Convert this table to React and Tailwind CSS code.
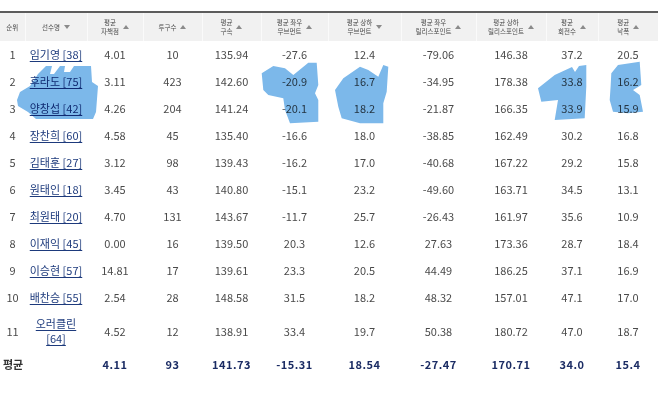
import React from "react";

const colW = ["w-[25px]","w-[62px]","w-[56px]","w-[59px]","w-[59px]","w-[67px]","w-[73px]","w-[75px]","w-[70px]","w-[52px]","w-[60px]"];

const headers = [
  { l: ["순위"] },
  { l: ["선수명"], a: "down" },
  { l: ["평균", "자책점"], a: "up" },
  { l: ["투구수"], a: "up" },
  { l: ["평균", "구속"], a: "up" },
  { l: ["평균 좌우", "무브먼트"], a: "up" },
  { l: ["평균 상하", "무브먼트"], a: "down" },
  { l: ["평균 좌우", "릴리스포인트"], a: "up" },
  { l: ["평균 상하", "릴리스포인트"], a: "up" },
  { l: ["평균", "회전수"], a: "up" },
  { l: ["평균", "낙폭"], a: "up" },
];

const rows = [
  ["1", "임기영 [38]", "4.01", "10", "135.94", "-27.6", "12.4", "-79.06", "146.38", "37.2", "20.5"],
  ["2", "후라도 [75]", "3.11", "423", "142.60", "-20.9", "16.7", "-34.95", "178.38", "33.8", "16.2"],
  ["3", "양창섭 [42]", "4.26", "204", "141.24", "-20.1", "18.2", "-21.87", "166.35", "33.9", "15.9"],
  ["4", "장찬희 [60]", "4.58", "45", "135.40", "-16.6", "18.0", "-38.85", "162.49", "30.2", "16.8"],
  ["5", "김태훈 [27]", "3.12", "98", "139.43", "-16.2", "17.0", "-40.68", "167.22", "29.2", "15.8"],
  ["6", "원태인 [18]", "3.45", "43", "140.80", "-15.1", "23.2", "-49.60", "163.71", "34.5", "13.1"],
  ["7", "최원태 [20]", "4.70", "131", "143.67", "-11.7", "25.7", "-26.43", "161.97", "35.6", "10.9"],
  ["8", "이재익 [45]", "0.00", "16", "139.50", "20.3", "12.6", "27.63", "173.36", "28.7", "18.4"],
  ["9", "이승현 [57]", "14.81", "17", "139.61", "23.3", "20.5", "44.49", "186.25", "37.1", "16.9"],
  ["10", "배찬승 [55]", "2.54", "28", "148.58", "31.5", "18.2", "48.32", "157.01", "47.1", "17.0"],
  ["11", "오러클린 [64]", "4.52", "12", "138.91", "33.4", "19.7", "50.38", "180.72", "47.0", "18.7"],
];

const avg = ["4.11", "93", "141.73", "-15.31", "18.54", "-27.47", "170.71", "34.0", "15.4"];

function Arrow({ dir }) {
  return (
    <svg width="6" height="4" viewBox="0 0 6 4" className="shrink-0">
      {dir === "up" ? (
        <path d="M3 0 L6 4 L0 4 Z" fill="#8a8a8a" />
      ) : (
        <path d="M0 0 L6 0 L3 4 Z" fill="#8a8a8a" />
      )}
    </svg>
  );
}

export default function App() {
  return (
    <div
      className="relative w-[658px] h-[401px] bg-white overflow-hidden pt-[11px]"
      style={{ fontFamily: '"Noto Sans CJK KR", "Noto Sans", sans-serif' }}
    >
      <table className="table-fixed border-collapse w-[658px]">
        <colgroup>
          {colW.map((c, i) => (
            <col key={i} className={c} />
          ))}
        </colgroup>
        <thead>
          <tr className="h-[29px] bg-[#f1f1f1]">
            {headers.map((h, i) => (
              <th
                key={i}
                className={
                  "border-t-2 border-t-[#5c5c5c] p-0 font-normal align-middle " +
                  (i > 0 ? "border-l border-l-[#fafafa]" : "")
                }
              >
                <div className="flex items-center justify-center gap-[4px]">
                  <div className="flex flex-col items-center text-[6.5px] leading-[9px] text-[#4a4a4a] whitespace-nowrap">
                    {h.l.map((t, j) => (
                      <span key={j}>{t}</span>
                    ))}
                  </div>
                  {h.a && <Arrow dir={h.a} />}
                </div>
              </th>
            ))}
          </tr>
        </thead>
        <tbody className="text-[11px] text-[#4a4a4a]">
          {rows.map((r, ri) => (
            <tr key={ri} className={ri === 10 ? "h-[40px]" : "h-[27px]"}>
              {r.map((v, ci) => (
                <td key={ci} className="p-0 text-center align-middle leading-[15px]">
                  {ci === 1 ? (
                    <span className="px-[2px] block text-[#1d3a7c] underline underline-offset-[2px]">{v}</span>
                  ) : (
                    v
                  )}
                </td>
              ))}
            </tr>
          ))}
          <tr className="h-[26px]">
            <td className="p-0 pl-[3px] text-left align-middle font-bold text-[#333] whitespace-nowrap">평균</td>
            <td className="p-0"></td>
            {avg.map((v, i) => (
              <td key={i} className="p-0 text-center align-middle font-bold text-[#1b2c64] tracking-[0.5px]">
                {v}
              </td>
            ))}
          </tr>
        </tbody>
      </table>

      <svg
        className="absolute left-0 top-0 pointer-events-none mix-blend-multiply"
        width="658"
        height="401"
        viewBox="0 0 658 401"
      >
        <g fill="#7cb8ea">
          <path d="M17 100 L20 92 L30 86 L38 74 L46 66 L52 66 L50 74 L54 74 L60 66 L65 66 L64 72 L70 72 L74 66 L91 66 L92 82 L98 86 L96 112 L93 119 L36 119 L28 112 L18 106 Z" />
          <path d="M261.7 73.3 L273.3 66 L285 68.3 L293.3 75 L308.3 62.7 L316.7 62.7 L318.3 85 L315 93.3 L318.3 100 L318.3 121.7 L290 123.3 L285 110 L283.3 98.3 L268.3 95 L263.3 90 Z" />
          <path d="M335 90 L343.3 78.3 L360 66.7 L368.3 70 L378.3 76.7 L383.3 65 L388.3 66.7 L386.7 91.7 L383.3 103.3 L383.3 123.3 L360 123.3 L341.7 118.3 L338.3 106.7 Z" />
          <path d="M538 88.3 L554.7 75 L572 67 L575 72 L579 66 L586.3 65 L586.3 86.7 L584.7 118.3 L554.7 120 L558 100 L541.3 101.7 Z" />
          <path d="M611.3 73.3 L618 65 L639.7 61.7 L641.3 85 L633 90 L639.7 95 L643 111.7 L628 113.3 L613 111.7 L609.7 100 L610.7 85 Z" />
        </g>
      </svg>
    </div>
  );
}
